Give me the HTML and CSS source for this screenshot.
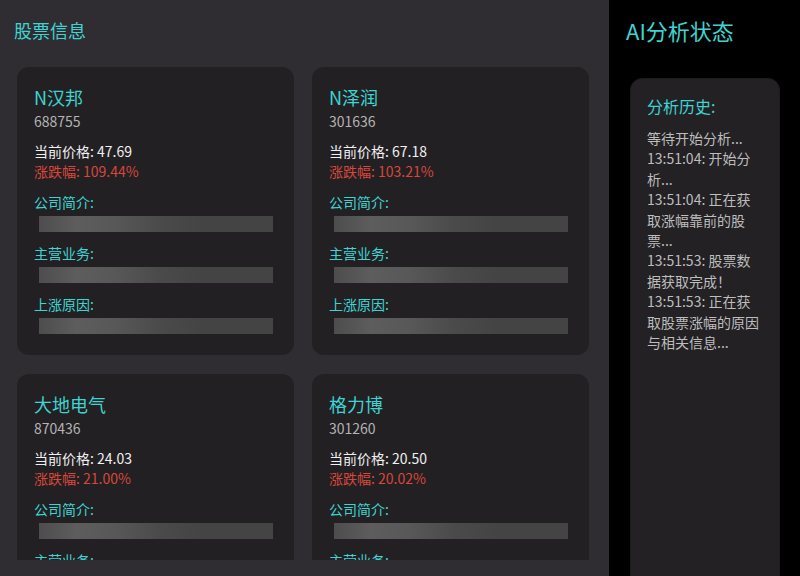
FILE: index.html
```html
<!DOCTYPE html>
<html lang="zh-CN">
<head>
<meta charset="utf-8">
<title>股票信息</title>
<link rel="stylesheet" href="styles.css">
</head>
<body>
<div class="app">
  <main class="stocks">
    <h2 class="pane-title">股票信息</h2>
    <div class="grid">
      <div class="card">
        <div class="name">N汉邦</div>
        <div class="code">688755</div>
        <div class="quote">
          <div class="price">当前价格: 47.69</div>
          <div class="change">涨跌幅: 109.44%</div>
        </div>
        <div class="field"><div class="label">公司简介:</div><div class="bar"></div></div>
        <div class="field"><div class="label">主营业务:</div><div class="bar"></div></div>
        <div class="field"><div class="label">上涨原因:</div><div class="bar"></div></div>
      </div>
      <div class="card">
        <div class="name">N泽润</div>
        <div class="code">301636</div>
        <div class="quote">
          <div class="price">当前价格: 67.18</div>
          <div class="change">涨跌幅: 103.21%</div>
        </div>
        <div class="field"><div class="label">公司简介:</div><div class="bar"></div></div>
        <div class="field"><div class="label">主营业务:</div><div class="bar"></div></div>
        <div class="field"><div class="label">上涨原因:</div><div class="bar"></div></div>
      </div>
      <div class="card">
        <div class="name">大地电气</div>
        <div class="code">870436</div>
        <div class="quote">
          <div class="price">当前价格: 24.03</div>
          <div class="change">涨跌幅: 21.00%</div>
        </div>
        <div class="field"><div class="label">公司简介:</div><div class="bar"></div></div>
        <div class="field"><div class="label">主营业务:</div><div class="bar"></div></div>
        <div class="field"><div class="label">上涨原因:</div><div class="bar"></div></div>
      </div>
      <div class="card">
        <div class="name">格力博</div>
        <div class="code">301260</div>
        <div class="quote">
          <div class="price">当前价格: 20.50</div>
          <div class="change">涨跌幅: 20.02%</div>
        </div>
        <div class="field"><div class="label">公司简介:</div><div class="bar"></div></div>
        <div class="field"><div class="label">主营业务:</div><div class="bar"></div></div>
        <div class="field"><div class="label">上涨原因:</div><div class="bar"></div></div>
      </div>
    </div>
  </main>
  <aside class="ai">
    <h2 class="ai-title">AI分析状态</h2>
    <div class="history">
      <div class="history-title">分析历史:</div>
      <div class="log">等待开始分析...</div>
      <div class="log">13:51:04: 开始分析...</div>
      <div class="log">13:51:04: 正在获取涨幅靠前的股票...</div>
      <div class="log">13:51:53: 股票数据获取完成！</div>
      <div class="log">13:51:53: 正在获取股票涨幅的原因与相关信息...</div>
    </div>
  </aside>
</div>
</body>
</html>
```
FILE: styles.css
```css
* { box-sizing: border-box; }
html, body {
  margin: 0;
  padding: 0;
  height: 100%;
  background: #000;
  font-family: "Noto Sans CJK SC", "Noto Sans", sans-serif;
  overflow: hidden;
}
.app {
  display: flex;
  width: 800px;
  height: 576px;
}
.stocks {
  width: 609px;
  flex: none;
  background: #2f2d31;
  padding: 17px 20px 16px 14px;
  display: flex;
  flex-direction: column;
}
.pane-title {
  margin: 0 0 24px 0;
  font-size: 18px;
  line-height: 26px;
  font-weight: 400;
  color: #3fd4d2;
}
.grid {
  flex: 1;
  min-height: 0;
  overflow: hidden;
  padding: 0 0 0 3px;
  display: grid;
  grid-template-columns: 277px 277px;
  column-gap: 18px;
  row-gap: 19px;
  align-content: start;
}
.card {
  background: #222023;
  border-radius: 12px;
  padding: 17px;
  display: flex;
  flex-direction: column;
}
.name {
  font-size: 18px;
  line-height: 26px;
  color: #3fd4d2;
}
.code {
  margin-top: 1px;
  font-size: 14px;
  line-height: 20px;
  color: #b4b4b4;
}
.quote {
  margin-top: 10px;
  font-size: 14px;
  line-height: 20px;
}
.price { color: #f0f0f0; }
.change { color: #d8473b; }
.field {
  margin-top: 7px;
  display: flex;
  flex-direction: column;
}
.quote + .field { margin-top: 11px; }
.label {
  font-size: 14px;
  line-height: 20px;
  color: #3fd4d2;
}
.bar {
  height: 16px;
  margin: 4px 4px 4px 5px;
  background: linear-gradient(90deg, #4d4d4d 0%, #5d5d5d 16%, #585858 32%, #4a4a4a 52%, #444444 70%, #444444 100%);
}
.ai {
  flex: 1;
  background: #000;
  padding: 17px 20px 0 17px;
  display: flex;
  flex-direction: column;
  overflow: hidden;
}
.ai-title {
  margin: 0 0 35px 0;
  font-size: 22px;
  line-height: 26px;
  font-weight: 400;
  color: #3fd4d2;
}
.history {
  margin-left: 4px;
  min-height: 540px;
  flex: none;
  background: #232124;
  border: 1px solid #1c1b1e;
  border-radius: 12px;
  padding: 16px 16px;
}
.history-title {
  font-size: 16px;
  line-height: 23px;
  color: #3fd4d2;
  margin-bottom: 10px;
}
.log {
  font-size: 14px;
  line-height: 20.4px;
  color: #bdbdbd;
}
```
